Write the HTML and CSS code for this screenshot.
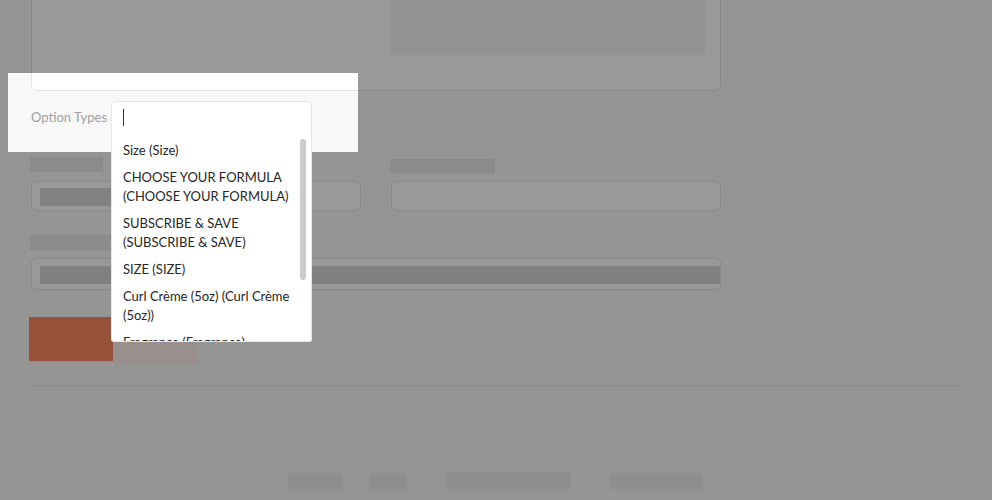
FILE: index.html
```html
<!DOCTYPE html>
<html lang="en">
<head>
<meta charset="utf-8">
<title>Option Types</title>
<link rel="stylesheet" href="styles.css">
</head>
<body>
<div class="page">
  <main class="form">
    <section class="card">
      <div class="media"></div>
    </section>

    <div class="option-row">
      <label class="opt-label">Option Types</label>
      <div class="select">
        <div class="search"><span class="caret"></span></div>
        <div class="menu">
          <ul class="list">
            <li>Size (Size)</li>
            <li>CHOOSE YOUR FORMULA (CHOOSE YOUR FORMULA)</li>
            <li>SUBSCRIBE &amp; SAVE (SUBSCRIBE &amp; SAVE)</li>
            <li>SIZE (SIZE)</li>
            <li>Curl Crème (5oz) (Curl Crème (5oz))</li>
            <li>Fragrance (Fragrance)</li>
          </ul>
          <div class="thumb"></div>
        </div>
      </div>
    </div>

    <div class="grid2">
      <div class="field">
        <div class="bar bar-a"></div>
        <div class="input"><div class="fill fill-a"></div></div>
      </div>
      <div class="field">
        <div class="bar bar-b"></div>
        <div class="input input-b"></div>
      </div>
    </div>

    <div class="field wide">
      <div class="bar bar-c"></div>
      <div class="input input-wide"><div class="fill fill-wide"></div></div>
    </div>

    <div class="actions">
      <span class="btn btn-primary"></span>
      <span class="btn btn-secondary"></span>
    </div>
  </main>

  <hr class="divider">

  <footer class="footer">
    <span class="flink f1"></span>
    <span class="flink f2"></span>
    <span class="flink f3"></span>
    <span class="flink f4"></span>
  </footer>
</div>
<div class="spotlight"></div>
</body>
</html>
```

FILE: styles.css
```css
html, body {
  margin: 0;
  padding: 0;
  height: 500px;
  overflow: hidden;
}
body {
  background: #f8f8f8;
  font-family: Lato, "Open Sans", "Liberation Sans", sans-serif;
  color: #262626;
}
.page {
  padding: 0 32px 0 31px;
}
.form {
  width: 690px;
}

/* top card (scrolled partly out of view) */
.card {
  margin-top: -30px;
  box-sizing: border-box;
  height: 121px;
  border: 1px solid #e3e3e3;
  border-radius: 5px;
  background: #fff;
  padding: 16px 15px 35px;
  display: flex;
  justify-content: flex-end;
}
.media {
  width: 315px;
  height: 68px;
  background: #f5f5f5;
  border-radius: 4px;
}

/* option types row */
.option-row {
  margin-top: 10px;
  height: 32px;
  display: flex;
  align-items: center;
}
.opt-label {
  width: 80px;
  font-size: 13px;
  line-height: 18px;
  color: #a0a0a0;
}
.select {
  position: relative;
  z-index: 20;
  width: 201px;
  height: 32px;
}
.search {
  box-sizing: border-box;
  height: 32px;
  background: #fff;
  border: 1px solid #e6e6e6;
  border-bottom: none;
  border-radius: 5px 5px 0 0;
  padding: 0 11px;
  display: flex;
  align-items: center;
}
.caret {
  display: block;
  width: 1px;
  height: 17px;
  margin-top: -1px;
  background: #333;
}
.menu {
  position: absolute;
  top: 32px;
  left: 0;
  box-sizing: border-box;
  width: 201px;
  height: 209px;
  background: #fff;
  border: 1px solid #e6e6e6;
  border-top: none;
  border-radius: 0 0 3px 3px;
  overflow: hidden;
}
.list {
  list-style: none;
  margin: 0;
  padding: 4px 0 0;
}
.list li {
  padding: 4px 12px 4px 11px;
  font-size: 13px;
  line-height: 19px;
  color: #262626;
}
.thumb {
  position: absolute;
  top: 6px;
  right: 5px;
  width: 6px;
  height: 141px;
  border-radius: 3px;
  background: #cbcbcb;
}

/* fields */
.grid2 {
  margin-top: 24px;
  display: grid;
  grid-template-columns: 330px 330px;
  column-gap: 30px;
}
.field {
  display: flex;
  flex-direction: column;
}
.bar {
  height: 15px;
  margin-left: -1px;
  background: #e8e8e8;
}
.bar-a { width: 73px; margin-bottom: 9px; }
.bar-b { width: 105px; margin-top: 2px; margin-bottom: 7px; }
.bar-c { width: 120px; margin-bottom: 8px; }
.input {
  box-sizing: border-box;
  height: 30px;
  border: 1px solid #e4e4e4;
  border-radius: 5px;
  background: #fff;
  padding: 6px 8px;
}
.fill {
  height: 18px;
  background: #d9d9d9;
}
.fill-a { width: 200px; }
.wide {
  margin-top: 24px;
}
.input-wide {
  height: 32px;
  padding: 7px 8px;
}
.fill-wide {
  width: 680px;
  background: #d5d5d5;
}

/* actions */
.actions {
  margin-top: 27px;
  margin-left: -2px;
  display: flex;
  align-items: flex-start;
}
.btn {
  display: block;
}
.btn-primary {
  width: 84px;
  height: 44px;
  background: #fa8962;
}
.btn-secondary {
  width: 85px;
  height: 46px;
  background: #ffeee9;
}

.divider {
  margin: 22px 0 0;
  border: none;
  height: 1px;
  background: #e4e4e4;
}

.footer {
  margin-top: 86px;
  display: flex;
  justify-content: center;
  align-items: flex-start;
}
.flink {
  display: block;
  height: 16px;
  background: #ededed;
}
.f1 { width: 55px; margin-top: 1px; }
.f2 { width: 38px; margin-left: 26px; margin-top: 1px; }
.f3 { width: 125px; height: 17px; margin-left: 39px; }
.f4 { width: 93px; margin-left: 39px; margin-top: 1px; }

/* tour spotlight */
.spotlight {
  position: absolute;
  left: 8px;
  top: 73px;
  width: 350px;
  height: 79px;
  z-index: 10;
  pointer-events: none;
  box-shadow: 0 0 0 3000px rgba(0, 0, 0, 0.4);
}
```
